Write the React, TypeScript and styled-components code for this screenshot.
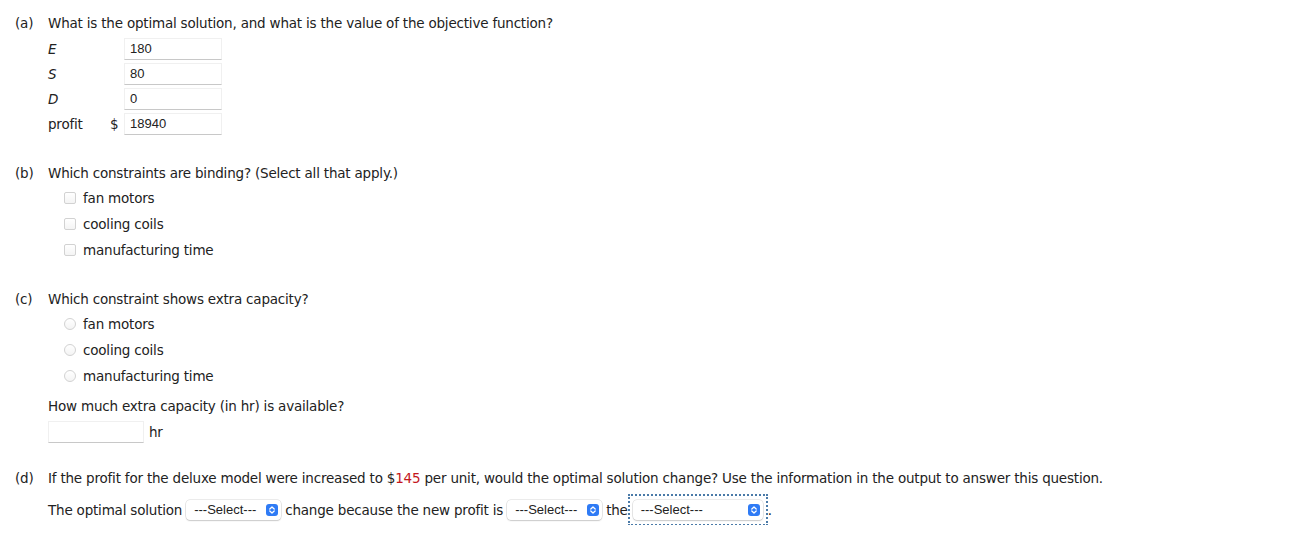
import React from "react";
import styled, { createGlobalStyle } from "styled-components";

const Global = createGlobalStyle`
  html, body { margin: 0; padding: 0; background: #fff; }
  body {
    font-family: "DejaVu Sans", Verdana, sans-serif;
    font-size: 13.5px;
    letter-spacing: -0.2px;
    color: #222;
  }
`;

const Page = styled.div`
  padding: 11px 15px 0 15px;
`;

const Part = styled.section<{ $top: number }>`
  display: grid;
  grid-template-columns: 33px 1fr;
  margin-top: ${(p) => p.$top}px;
`;

const PartLabel = styled.div`
  line-height: 25px;
`;

const Body = styled.div`
  display: flex;
  flex-direction: column;
`;

const Line = styled.div<{ $top?: number }>`
  line-height: 25px;
  white-space: nowrap;
  margin-top: ${(p) => p.$top ?? 0}px;
`;

const Red = styled.span`
  color: #c4161c;
`;

const VarRow = styled.div`
  display: grid;
  grid-template-columns: 62px 14px 98px;
  align-items: center;
  height: 25px;
`;

const VarName = styled.span<{ $italic?: boolean }>`
  font-style: ${(p) => (p.$italic ? "italic" : "normal")};
`;

const Field = styled.div<{ $width: number }>`
  width: ${(p) => p.$width}px;
  height: 22px;
  box-sizing: border-box;
  border: 1px solid #f0f0f0;
  border-bottom: 1px solid #c8c8c8;
  padding: 0 5px;
  display: flex;
  align-items: center;
  font-family: "Liberation Sans", Arial, sans-serif;
  font-size: 13px;
  letter-spacing: 0;
  color: #222;
`;

const Options = styled.div`
  display: flex;
  flex-direction: column;
  padding-left: 16px;
  margin-top: -1px;
`;

const Option = styled.label`
  display: flex;
  align-items: center;
  gap: 7px;
  height: 26px;
`;

const Box = styled.span<{ $round?: boolean }>`
  width: 12px;
  height: 12px;
  box-sizing: border-box;
  border: 1px solid #d2d2d2;
  border-radius: ${(p) => (p.$round ? "50%" : "2px")};
  background: linear-gradient(#fff, #f4f4f4);
  flex: none;
`;

const CapacityRow = styled.div`
  display: flex;
  align-items: center;
  gap: 5px;
  height: 26px;
`;

const SentenceRow = styled.div`
  display: flex;
  align-items: center;
  height: 31px;
  white-space: nowrap;
  margin-top: 3px;
`;

const Word = styled.span<{ $ml?: number }>`
  margin-left: ${(p) => p.$ml ?? 0}px;
`;

const Focus = styled.span`
  display: inline-flex;
  align-items: center;
  padding: 4px 3px;
  border: 2px dotted #4a7aa8;
`;

const Select = styled.span<{ $width: number; $ml?: number }>`
  display: inline-flex;
  align-items: center;
  justify-content: space-between;
  box-sizing: border-box;
  width: ${(p) => p.$width}px;
  height: 20px;
  margin-left: ${(p) => p.$ml ?? 0}px;
  padding: 0 3px 0 8px;
  background: #fff;
  border-radius: 4px;
  box-shadow: 0 0 0 0.5px rgba(0, 0, 0, 0.16), 0 1px 1.5px rgba(0, 0, 0, 0.14);
  font-family: "Liberation Sans", Arial, sans-serif;
  font-size: 13px;
  letter-spacing: 0;
  color: #222;
`;

const SelectIcon = () => (
  <svg width="12" height="12" viewBox="0 0 12 12">
    <rect x="0" y="0" width="12" height="12" rx="3" fill="#2f7bf5" />
    <path d="M3.8 5 L6 3 L8.2 5" stroke="#fff" strokeWidth="1.3" fill="none" strokeLinecap="round" strokeLinejoin="round" />
    <path d="M3.8 7 L6 9 L8.2 7" stroke="#fff" strokeWidth="1.3" fill="none" strokeLinecap="round" strokeLinejoin="round" />
  </svg>
);

const Dropdown = ({ width, ml }: { width: number; ml?: number }) => (
  <Select $width={width} $ml={ml}>
    <span>---Select---</span>
    <SelectIcon />
  </Select>
);

const constraints = ["fan motors", "cooling coils", "manufacturing time"];

export default function App() {
  return (
    <Page>
      <Global />
      <Part $top={0}>
        <PartLabel>(a)</PartLabel>
        <Body>
          <Line>What is the optimal solution, and what is the value of the objective function?</Line>
          <VarRow>
            <VarName $italic>E</VarName>
            <span />
            <Field $width={98}>180</Field>
          </VarRow>
          <VarRow>
            <VarName $italic>S</VarName>
            <span />
            <Field $width={98}>80</Field>
          </VarRow>
          <VarRow>
            <VarName $italic>D</VarName>
            <span />
            <Field $width={98}>0</Field>
          </VarRow>
          <VarRow>
            <VarName>profit</VarName>
            <span>$</span>
            <Field $width={98}>18940</Field>
          </VarRow>
        </Body>
      </Part>

      <Part $top={25}>
        <PartLabel>(b)</PartLabel>
        <Body>
          <Line>Which constraints are binding? (Select all that apply.)</Line>
          <Options>
            {constraints.map((c) => (
              <Option key={c}>
                <Box />
                {c}
              </Option>
            ))}
          </Options>
        </Body>
      </Part>

      <Part $top={24}>
        <PartLabel>(c)</PartLabel>
        <Body>
          <Line>Which constraint shows extra capacity?</Line>
          <Options>
            {constraints.map((c) => (
              <Option key={c}>
                <Box $round />
                {c}
              </Option>
            ))}
          </Options>
          <Line $top={5}>How much extra capacity (in hr) is available?</Line>
          <CapacityRow>
            <Field $width={96} />
            <span>hr</span>
          </CapacityRow>
        </Body>
      </Part>

      <Part $top={21}>
        <PartLabel>(d)</PartLabel>
        <Body>
          <Line>
            If the profit for the deluxe model were increased to $<Red>145</Red> per unit, would the optimal solution change? Use the information in the output to answer this question.
          </Line>
          <SentenceRow>
            <Word>The optimal solution</Word>
            <Dropdown width={95} ml={4} />
            <Word $ml={4}>change because the new profit is</Word>
            <Dropdown width={95} ml={4} />
            <Word $ml={4}>the</Word>
            <Focus>
              <Dropdown width={130} />
            </Focus>
            <Word>.</Word>
          </SentenceRow>
        </Body>
      </Part>
    </Page>
  );
}
